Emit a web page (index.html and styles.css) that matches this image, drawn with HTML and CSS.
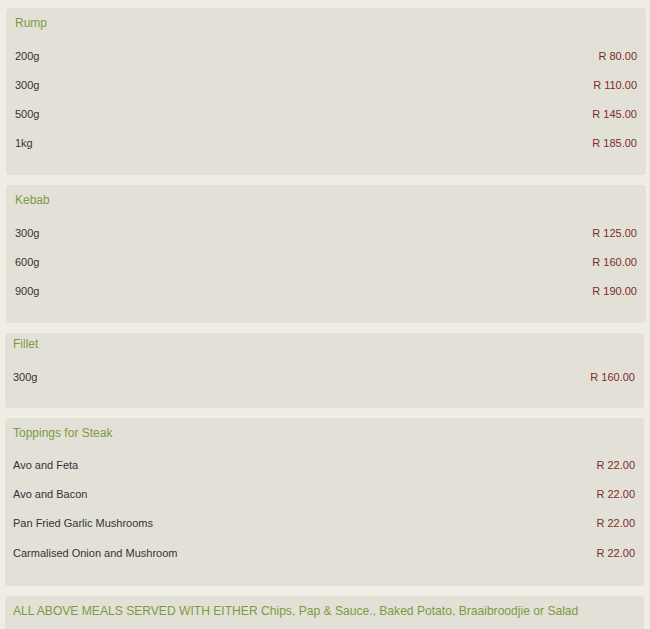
FILE: index.html
```html
<!DOCTYPE html>
<html lang="en">
<head>
  <meta charset="UTF-8" />
  <meta name="viewport" content="width=device-width, initial-scale=1.0"/>
  <title>Steak Menu</title>
  <link rel="stylesheet" href="styles.css">
</head>
<body>
  <div class="menu">
    <div class="section">
      <h2>Rump</h2>
      <div class="row"><span>200g</span><span class="price">R 80.00</span></div>
      <div class="row"><span>300g</span><span class="price">R 110.00</span></div>
      <div class="row"><span>500g</span><span class="price">R 145.00</span></div>
      <div class="row"><span>1kg</span><span class="price">R 185.00</span></div>
    </div>

    <div class="section">
      <h2>Kebab</h2>
      <div class="row"><span>300g</span><span class="price">R 125.00</span></div>
      <div class="row"><span>600g</span><span class="price">R 160.00</span></div>
      <div class="row"><span>900g</span><span class="price">R 190.00</span></div>
    </div>

    <div class="section narrow fillet">
      <h2>Fillet</h2>
      <div class="row"><span>300g</span><span class="price">R 160.00</span></div>
    </div>

    <div class="section narrow toppings">
      <h2>Toppings for Steak</h2>
      <div class="row"><span>Avo and Feta</span><span class="price">R 22.00</span></div>
      <div class="row"><span>Avo and Bacon</span><span class="price">R 22.00</span></div>
      <div class="row"><span>Pan Fried Garlic Mushrooms</span><span class="price">R 22.00</span></div>
      <div class="row"><span>Carmalised Onion and Mushroom</span><span class="price">R 22.00</span></div>
    </div>

    <div class="section narrow note">
      <h2>ALL ABOVE MEALS SERVED WITH EITHER Chips, Pap &amp; Sauce., Baked Potato, Braaibroodjie or Salad</h2>
    </div>
  </div>
</body>
</html>
```

FILE: styles.css
```css
body {
  margin: 0;
  background: #efeee4;
  font-family: "Liberation Sans", Arial, sans-serif;
  color: #333;
}
.menu {
  padding: 8px 4px 0 6px;
}
.section {
  background: #e3e1d7;
  border-radius: 4px;
  padding: 7px 9px 18px;
  margin-bottom: 10px;
}
.section.narrow {
  margin-left: -1px;
  margin-right: 2px;
  padding-left: 8px;
}
.fillet {
  padding-top: 3px;
  padding-bottom: 17px;
}
.toppings .row {
  height: 29.4px;
}
.section h2 {
  margin: 0 0 9px;
  font-size: 12px;
  line-height: 17px;
  font-weight: normal;
  color: #7d9a3e;
}
.toppings h2 {
  margin-bottom: 8px;
}
.note h2 {
  margin: 0;
  font-size: 12.1px;
}
.row {
  display: flex;
  justify-content: space-between;
  align-items: center;
  height: 29px;
  font-size: 11px;
}
.price {
  color: #7b2c2c;
}
```
